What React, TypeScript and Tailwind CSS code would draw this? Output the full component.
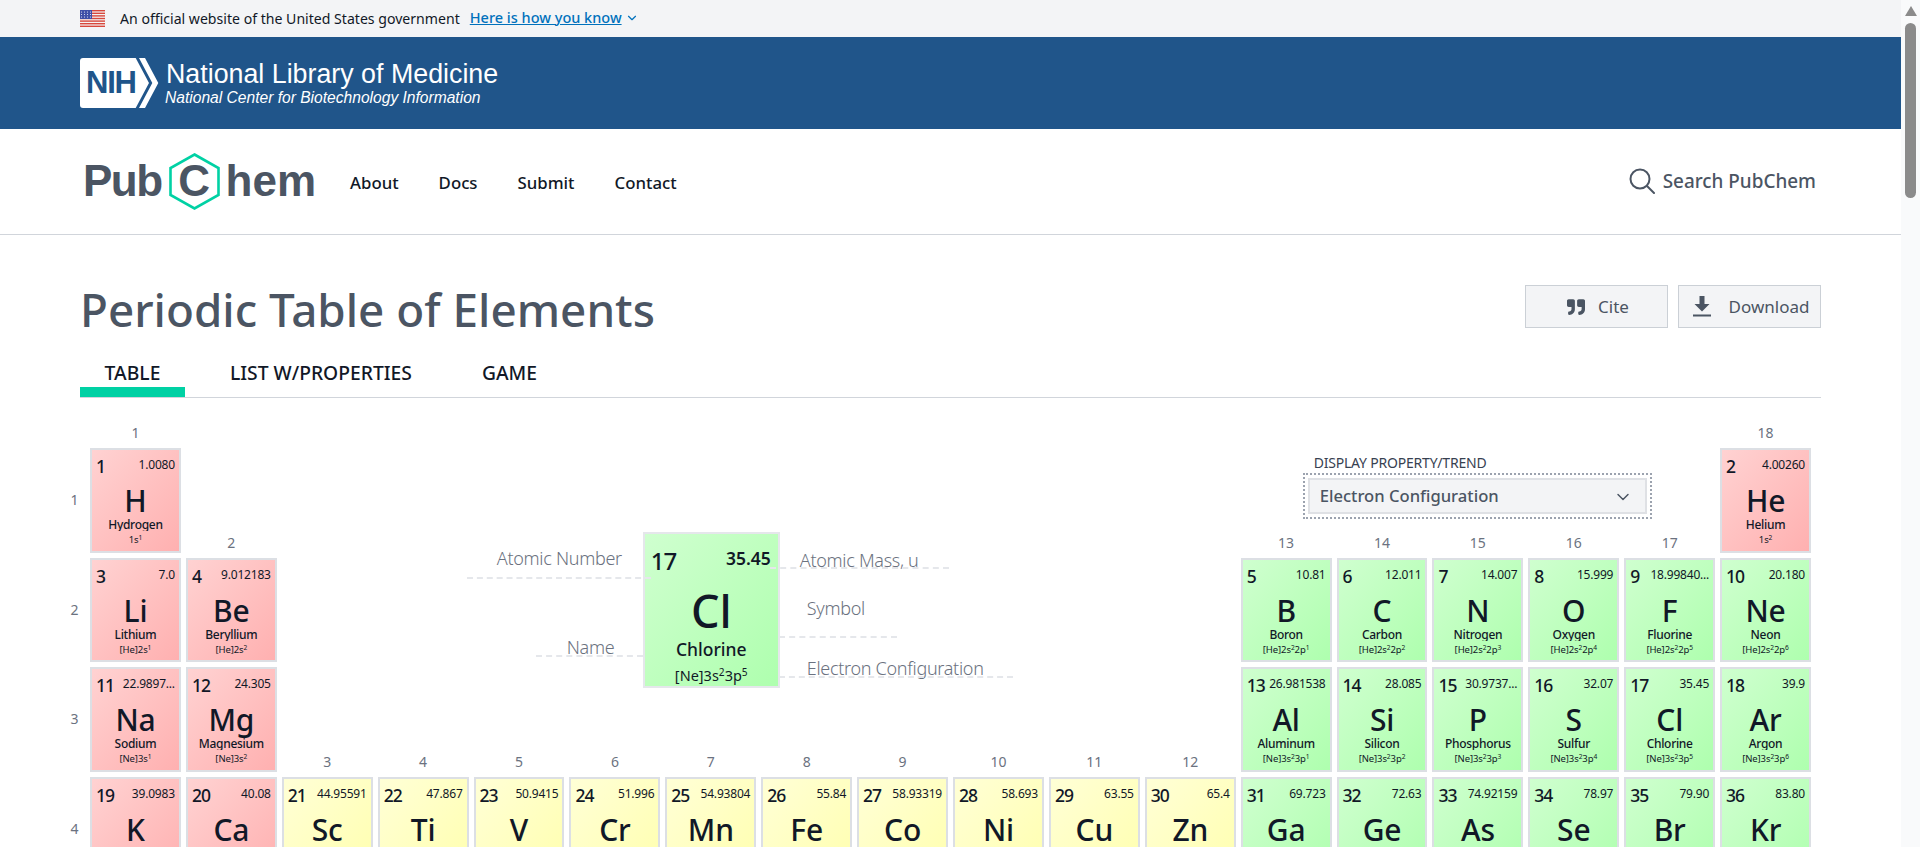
import { ChevronDown } from "lucide-react";
import { FaQuoteRight } from "react-icons/fa";

type Kind = "alkali" | "metal" | "other";

type Element = {
  z: number;
  symbol: string;
  name: string;
  mass: string;
  config: string;
  col: number;
  row: number;
  kind: Kind;
};

const elements: Element[] = [
  { z: 1, symbol: "H", name: "Hydrogen", mass: "1.0080", config: "1s1", col: 1, row: 1, kind: "alkali" },
  { z: 2, symbol: "He", name: "Helium", mass: "4.00260", config: "1s2", col: 18, row: 1, kind: "alkali" },
  { z: 3, symbol: "Li", name: "Lithium", mass: "7.0", config: "[He]2s1", col: 1, row: 2, kind: "alkali" },
  { z: 4, symbol: "Be", name: "Beryllium", mass: "9.012183", config: "[He]2s2", col: 2, row: 2, kind: "alkali" },
  { z: 5, symbol: "B", name: "Boron", mass: "10.81", config: "[He]2s22p1", col: 13, row: 2, kind: "other" },
  { z: 6, symbol: "C", name: "Carbon", mass: "12.011", config: "[He]2s22p2", col: 14, row: 2, kind: "other" },
  { z: 7, symbol: "N", name: "Nitrogen", mass: "14.007", config: "[He]2s22p3", col: 15, row: 2, kind: "other" },
  { z: 8, symbol: "O", name: "Oxygen", mass: "15.999", config: "[He]2s22p4", col: 16, row: 2, kind: "other" },
  { z: 9, symbol: "F", name: "Fluorine", mass: "18.99840...", config: "[He]2s22p5", col: 17, row: 2, kind: "other" },
  { z: 10, symbol: "Ne", name: "Neon", mass: "20.180", config: "[He]2s22p6", col: 18, row: 2, kind: "other" },
  { z: 11, symbol: "Na", name: "Sodium", mass: "22.9897...", config: "[Ne]3s1", col: 1, row: 3, kind: "alkali" },
  { z: 12, symbol: "Mg", name: "Magnesium", mass: "24.305", config: "[Ne]3s2", col: 2, row: 3, kind: "alkali" },
  { z: 13, symbol: "Al", name: "Aluminum", mass: "26.981538", config: "[Ne]3s23p1", col: 13, row: 3, kind: "other" },
  { z: 14, symbol: "Si", name: "Silicon", mass: "28.085", config: "[Ne]3s23p2", col: 14, row: 3, kind: "other" },
  { z: 15, symbol: "P", name: "Phosphorus", mass: "30.9737...", config: "[Ne]3s23p3", col: 15, row: 3, kind: "other" },
  { z: 16, symbol: "S", name: "Sulfur", mass: "32.07", config: "[Ne]3s23p4", col: 16, row: 3, kind: "other" },
  { z: 17, symbol: "Cl", name: "Chlorine", mass: "35.45", config: "[Ne]3s23p5", col: 17, row: 3, kind: "other" },
  { z: 18, symbol: "Ar", name: "Argon", mass: "39.9", config: "[Ne]3s23p6", col: 18, row: 3, kind: "other" },
  { z: 19, symbol: "K", name: "Potassium", mass: "39.0983", config: "[Ar]4s1", col: 1, row: 4, kind: "alkali" },
  { z: 20, symbol: "Ca", name: "Calcium", mass: "40.08", config: "[Ar]4s2", col: 2, row: 4, kind: "alkali" },
  { z: 21, symbol: "Sc", name: "Scandium", mass: "44.95591", config: "[Ar]3d14s2", col: 3, row: 4, kind: "metal" },
  { z: 22, symbol: "Ti", name: "Titanium", mass: "47.867", config: "[Ar]3d24s2", col: 4, row: 4, kind: "metal" },
  { z: 23, symbol: "V", name: "Vanadium", mass: "50.9415", config: "[Ar]3d34s2", col: 5, row: 4, kind: "metal" },
  { z: 24, symbol: "Cr", name: "Chromium", mass: "51.996", config: "[Ar]3d54s1", col: 6, row: 4, kind: "metal" },
  { z: 25, symbol: "Mn", name: "Manganese", mass: "54.93804", config: "[Ar]3d54s2", col: 7, row: 4, kind: "metal" },
  { z: 26, symbol: "Fe", name: "Iron", mass: "55.84", config: "[Ar]3d64s2", col: 8, row: 4, kind: "metal" },
  { z: 27, symbol: "Co", name: "Cobalt", mass: "58.93319", config: "[Ar]3d74s2", col: 9, row: 4, kind: "metal" },
  { z: 28, symbol: "Ni", name: "Nickel", mass: "58.693", config: "[Ar]3d84s2", col: 10, row: 4, kind: "metal" },
  { z: 29, symbol: "Cu", name: "Copper", mass: "63.55", config: "[Ar]3d104s1", col: 11, row: 4, kind: "metal" },
  { z: 30, symbol: "Zn", name: "Zinc", mass: "65.4", config: "[Ar]3d104s2", col: 12, row: 4, kind: "metal" },
  { z: 31, symbol: "Ga", name: "Gallium", mass: "69.723", config: "[Ar]3d104s24p1", col: 13, row: 4, kind: "other" },
  { z: 32, symbol: "Ge", name: "Germanium", mass: "72.63", config: "[Ar]3d104s24p2", col: 14, row: 4, kind: "other" },
  { z: 33, symbol: "As", name: "Arsenic", mass: "74.92159", config: "[Ar]3d104s24p3", col: 15, row: 4, kind: "other" },
  { z: 34, symbol: "Se", name: "Selenium", mass: "78.97", config: "[Ar]3d104s24p4", col: 16, row: 4, kind: "other" },
  { z: 35, symbol: "Br", name: "Bromine", mass: "79.90", config: "[Ar]3d104s24p5", col: 17, row: 4, kind: "other" },
  { z: 36, symbol: "Kr", name: "Krypton", mass: "83.80", config: "[Ar]3d104s24p6", col: 18, row: 4, kind: "other" },
];

// group number -> the grid row whose bottom edge it sits on
const groupLabels = [
  { group: 1, row: 0 },
  { group: 2, row: 1 },
  ...[3, 4, 5, 6, 7, 8, 9, 10, 11, 12].map((group) => ({ group, row: 3 })),
  ...[13, 14, 15, 16, 17].map((group) => ({ group, row: 1 })),
  { group: 18, row: 0 },
];

const kindClass: Record<Kind, string> = {
  alkali: "from-[#ffd2d2] to-[#ffb0b0]",
  metal: "from-[#ffffd6] to-[#ffffae]",
  other: "from-[#cfffcf] to-[#aeffae]",
};

const ConfigText = ({ value }: { value: string }) => (
  <>
    {value.split(/(?<=[spdf])(10|\d)/).map((part, index) =>
      index % 2 === 1 ? (
        <sup key={index} className="text-[70%] leading-none align-[0.45em] relative top-0">
          {part}
        </sup>
      ) : (
        <span key={index}>{part}</span>
      )
    )}
  </>
);

const Cell = ({ el }: { el: Element }) => (
  <div
    className={`flex flex-col border-2 border-[#dcdfe4] bg-linear-to-br ${kindClass[el.kind]} px-1 text-[#111827] overflow-hidden`}
    style={{ gridColumn: el.col + 1, gridRow: el.row + 1 }}
  >
    <div className="flex items-start justify-between pt-[5px] h-[28px]">
      <span className="text-[17.5px] leading-[23px] font-medium tracking-[-1px]">{el.z}</span>
      <span className="text-[12px] leading-[20px] tracking-[-0.2px] whitespace-nowrap">{el.mass}</span>
    </div>
    <div className="text-center text-[30px] leading-[33px] font-medium -tracking-[0.2px] mt-[6px]">{el.symbol}</div>
    <div className="text-center text-[12px] leading-[16px] h-[14px] overflow-hidden font-medium tracking-[-0.3px] whitespace-nowrap">
      {el.name}
    </div>
    <div className="text-center text-[9.5px] leading-[14px] mt-[2px] tracking-[-0.1px] whitespace-nowrap">
      <ConfigText value={el.config} />
    </div>
  </div>
);

const Legend = () => (
  <div className="relative" style={{ gridColumn: "4 / 14", gridRow: "2 / 5" }}>
    <div className="absolute left-[361px] top-[84px] w-[137px] h-[156px] flex flex-col border-2 border-[#e5e7eb] bg-linear-to-br from-[#cfffcf] to-[#aeffae] text-[#111827]">
      <div className="flex items-start justify-between pl-[6px] pr-[7px] pt-[12px] h-[48px]">
        <span className="text-[24px] leading-[30px] font-medium tracking-[-1px]">17</span>
        <span className="text-[17.5px] leading-[24px] font-semibold">35.45</span>
      </div>
      <div className="text-center text-[45px] leading-[54px] font-medium mt-[2px]">Cl</div>
      <div className="text-center text-[17.5px] leading-[22px] font-medium">Chlorine</div>
      <div className="text-center text-[14.5px] leading-[20px] mt-[5px]">
        <ConfigText value="[Ne]3s23p5" />
      </div>
    </div>
    <span className="absolute left-[215px] top-[97px] text-[18px] leading-[26px] font-light text-[#6b7280] tracking-[-0.3px]">Atomic Number</span>
    <div className="absolute left-[185px] top-[129px] w-[184px] border-t-2 border-dashed border-[#e5e7eb]" />
    <span className="absolute left-[518px] top-[99px] text-[18px] leading-[26px] font-light text-[#6b7280] tracking-[-0.3px]">Atomic Mass, u</span>
    <div className="absolute left-[488px] top-[119px] w-[179px] border-t-2 border-dashed border-[#e5e7eb]" />
    <span className="absolute left-[525px] top-[147px] text-[18px] leading-[26px] font-light text-[#6b7280] tracking-[-0.3px]">Symbol</span>
    <div className="absolute left-[497px] top-[188px] w-[118px] border-t-2 border-dashed border-[#e5e7eb]" />
    <span className="absolute left-[285px] top-[186px] text-[18px] leading-[26px] font-light text-[#6b7280] tracking-[-0.3px]">Name</span>
    <div className="absolute left-[254px] top-[207px] w-[107px] border-t-2 border-dashed border-[#e5e7eb]" />
    <span className="absolute left-[525px] top-[207px] text-[18px] leading-[26px] font-light text-[#6b7280] tracking-[-0.3px]">Electron Configuration</span>
    <div className="absolute left-[497px] top-[228px] w-[234px] border-t-2 border-dashed border-[#e5e7eb]" />
  </div>
);

const PropertySelect = () => (
  <div className="pl-[62px] pt-[6px]" style={{ gridColumn: "14 / 19", gridRow: 2 }}>
    <div className="pl-[11px] text-[14px] leading-[18px] text-[#374151] tracking-[-0.2px]">DISPLAY PROPERTY/TREND</div>
    <div className="w-[349px] h-[46px] p-[3px] border-2 border-dotted border-[#9ca3af] mt-[1px]">
      <div className="h-full flex items-center justify-between pl-[10px] pr-[12px] pt-[1px] bg-[#f3f4f6] border-2 border-[#dfe1e5] text-[#4b5563] text-[16.6px] font-medium">
        Electron Configuration
        <ChevronDown className="size-[20px]" strokeWidth={1.75} />
      </div>
    </div>
  </div>
);

const PeriodicTable = () => (
  <div className="grid grid-cols-[21px_repeat(18,minmax(0,1fr))] grid-rows-[20px_repeat(4,104.5px)] gap-[5px] mt-[25px]">
    {groupLabels.map(({ group, row }) => (
      <div
        key={group}
        className="self-end text-center text-[14px] leading-[20px] text-[#6b7280]"
        style={{ gridColumn: group + 1, gridRow: row + 1 }}
      >
        {group}
      </div>
    ))}
    {[1, 2, 3, 4].map((period) => (
      <div
        key={period}
        className="self-center text-center text-[14px] leading-[20px] text-[#6b7280]"
        style={{ gridColumn: 1, gridRow: period + 1 }}
      >
        {period}
      </div>
    ))}
    {elements.map((el) => (
      <Cell key={el.z} el={el} />
    ))}
    <Legend />
    <PropertySelect />
  </div>
);

const Flag = () => (
  <svg width="25" height="17" viewBox="0 0 25 17" className="shrink-0">
    <rect width="25" height="17" fill="#f4f4f4" />
    {[0, 2.6, 5.2, 7.8, 10.4, 13, 15.6].map((y) => (
      <rect key={y} y={y} width="25" height="1.4" fill="#d8483c" />
    ))}
    <rect width="12" height="9" fill="#3f4fa8" />
    {[2, 5, 8, 11].map((x) =>
      [2, 4.5, 7].map((y) => <circle key={`${x}-${y}`} cx={x - 0.5} cy={y} r="0.5" fill="#ffffff" />)
    )}
  </svg>
);

const NihLogo = () => (
  <div className="relative w-[79px] h-[50px] shrink-0">
    <svg width="79" height="50" viewBox="0 0 79 50" className="absolute inset-0">
      <path d="M3 0H55.7L69 25L55.7 50H3Q0 50 0 47V3Q0 0 3 0Z" fill="#ffffff" />
      <path d="M59 0H65L78.3 25L65 50H59L72.3 25Z" fill="#ffffff" />
    </svg>
    <span className="absolute left-[6px] top-[8px] text-[31px] leading-[34px] font-bold text-[#20558a] tracking-[-1.2px] font-['Liberation_Sans',sans-serif]">
      NIH
    </span>
  </div>
);

const PubChemLogo = () => (
  <div className="flex items-center -mt-[1px] font-['Liberation_Sans',sans-serif] font-bold text-[44px] leading-none text-[#4b5563] w-[231px]">
    <span className="tracking-[-1.5px] pl-[3px]">Pub</span>
    <span className="relative w-[51px] h-[57px] flex items-center justify-center ml-[7px] mr-[6px] shrink-0">
      <svg width="51" height="57" viewBox="0 0 51 57" className="absolute inset-0">
        <path d="M25.5 1.5L49.5 15V42L25.5 55.5L1.5 42V15Z" fill="none" stroke="#00d1a4" strokeWidth="2.6" strokeLinejoin="miter" />
      </svg>
      <span className="relative">C</span>
    </span>
    <span>hem</span>
  </div>
);

const Header = () => (
  <>
    <div className="h-[37px] bg-[#f3f4f6] pl-[80px] flex items-center gap-[15px] text-[14.1px] text-[#111827]">
      <Flag />
      <span>An official website of the United States government</span>
      <span className="flex items-center gap-[3px] -ml-[5px] pb-[2px] text-[14.5px] font-medium text-[#0071bc]">
        <span className="underline">Here is how you know</span>
        <ChevronDown className="size-[14px]" strokeWidth={2} />
      </span>
    </div>
    <div className="h-[92px] bg-[#20558a] pl-[80px] flex items-center gap-[7px] text-white font-['Liberation_Sans',sans-serif]">
      <NihLogo />
      <div className="-mt-[1px]">
        <div className="text-[26.8px] leading-[30px]">National Library of Medicine</div>
        <div className="text-[15.6px] leading-[17px] italic -ml-[1px]">National Center for Biotechnology Information</div>
      </div>
    </div>
    <div className="h-[106px] pl-[80px] pr-[85px] flex items-center border-b border-[#d1d5db]">
      <PubChemLogo />
      <nav className="flex gap-[40px] ml-[39px] mt-[3px] text-[16.8px] font-medium text-[#111827]">
        <span>About</span>
        <span>Docs</span>
        <span>Submit</span>
        <span>Contact</span>
      </nav>
      <div className="ml-auto flex items-center gap-[8px] text-[18.9px] font-medium text-[#4b5563]">
        <svg width="26" height="26" viewBox="0 0 26 26" fill="none" stroke="#4b5563" strokeWidth="2">
          <circle cx="11" cy="11" r="9.5" />
          <path d="M18 18L25 25" strokeLinecap="round" />
        </svg>
        Search PubChem
      </div>
    </div>
  </>
);

const Toolbar = () => (
  <>
    <div className="flex items-start justify-between mt-[46px]">
      <h1 className="text-[45.8px] leading-[56px] font-medium text-[#4b5563]">Periodic Table of Elements</h1>
      <div className="flex gap-[10px] mt-[4px]">
        <button className="w-[143px] h-[43px] flex items-center justify-center gap-[13px] pl-[3px] bg-[#f3f4f6] border border-[#cbd0d6] text-[17px] text-[#4b5563]">
          <FaQuoteRight className="size-[18px]" />
          Cite
        </button>
        <button className="w-[143px] h-[43px] flex items-center justify-center gap-[18px] pl-[3px] bg-[#f3f4f6] border border-[#cbd0d6] text-[17px] text-[#4b5563]">
          <svg width="18" height="21" viewBox="0 0 18 21" fill="#4b5563">
            <path d="M6.5 0H11.5V8H16.5L9 15.5L1.5 8H6.5ZM0 18.5H18V20.5H0Z" />
          </svg>
          Download
        </button>
      </div>
    </div>
    <div className="flex gap-[20px] mt-[24px] border-b border-[#d1d5db] text-[19.3px] font-medium text-[#111827]">
      <div className="w-[105px] text-center h-[36px] leading-[24px] border-b-[10px] border-[#00d1a4]">TABLE</div>
      <div className="px-[25px] h-[36px] leading-[24px]">LIST W/PROPERTIES</div>
      <div className="px-[25px] h-[36px] leading-[24px]">GAME</div>
    </div>
  </>
);

const Scrollbar = () => (
  <div className="w-[19px] shrink-0 bg-[#f9fafb] flex flex-col items-center">
    <svg width="12" height="10" viewBox="0 0 12 10" className="mt-[6px]">
      <path d="M6 0L12 10H0Z" fill="#8b8b8b" />
    </svg>
    <div className="w-[11px] h-[175px] rounded-full bg-[#8b8b8b] mt-[7px]" />
  </div>
);

const App = () => {
  return (
    <div className="flex h-[847px] overflow-hidden bg-white font-['Noto_Sans',sans-serif]">
      <div className="flex-1 min-w-0">
        <Header />
        <main className="pl-[80px] pr-[80px]">
          <Toolbar />
        </main>
        <div className="pl-[64px] pr-[90px]">
          <PeriodicTable />
        </div>
      </div>
      <Scrollbar />
    </div>
  );
};

export default App;
